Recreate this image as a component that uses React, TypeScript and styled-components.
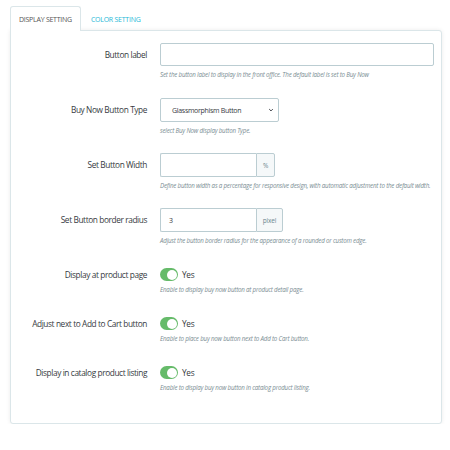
import React from "react";
import styled, { createGlobalStyle } from "styled-components";

const Global = createGlobalStyle`
  html, body { margin: 0; padding: 0; background: #fff; }
  body { font-family: "Open Sans", "Noto Sans", sans-serif; color: #363a41; }
  * { box-sizing: border-box; }
`;

const Page = styled.div`
  padding: 6px 8px 0 10px;
  width: 450px;
`;

const Tabs = styled.div`
  display: flex;
  align-items: flex-end;
  position: relative;
  z-index: 1;
  margin-bottom: -1px;
`;

const Tab = styled.div<{ $active?: boolean }>`
  height: 25px;
  display: flex;
  align-items: center;
  padding: 0 8px;
  font-size: 7px;
  letter-spacing: -0.25px;
  text-transform: uppercase;
  color: ${(p) => (p.$active ? "#555" : "#25b9d7")};
  background: ${(p) => (p.$active ? "#fff" : "transparent")};
  border: 1px solid ${(p) => (p.$active ? "#dbe6e9" : "transparent")};
  border-bottom: none;
  border-radius: 3px 3px 0 0;
  margin-right: ${(p) => (p.$active ? "1px" : "0")};
`;

const Panel = styled.div`
  border: 1px solid #dbe6e9;
  border-radius: 0 3px 3px 3px;
  box-shadow: 0 0 4px rgba(0, 0, 0, 0.08);
  background: #fff;
  padding: 12px 7px 31px 0;
`;

const Row = styled.div<{ $gap: number }>`
  display: grid;
  grid-template-columns: 136px 1fr;
  column-gap: 13px;
  margin-bottom: ${(p) => p.$gap}px;
  &:last-child { margin-bottom: 0; }
`;

const Label = styled.div<{ $h: number }>`
  text-align: right;
  font-size: 8.3px;
  letter-spacing: -0.4px;
  line-height: ${(p) => p.$h}px;
  color: #363a41;
`;

const Control = styled.div`
  display: flex;
  flex-direction: column;
  align-items: flex-start;
`;

const Help = styled.div`
  margin-top: 5px;
  font-size: 6.2px;
  letter-spacing: -0.2px;
  line-height: 8px;
  font-style: italic;
  color: #7a8d93;
  white-space: nowrap;
`;

const TextInput = styled.div<{ $w: number }>`
  width: ${(p) => p.$w}px;
  height: 23px;
  border: 1px solid #bbcdd2;
  border-radius: 2px;
  background: #fff;
  display: flex;
  align-items: center;
  padding: 0 8px;
  font-size: 7px;
  color: #363a41;
`;

const Select = styled.div`
  width: 119px;
  height: 24px;
  border: 1px solid #bbcdd2;
  border-radius: 2px;
  display: flex;
  align-items: center;
  justify-content: space-between;
  padding: 0 4px 0 11px;
  font-size: 7px;
  letter-spacing: -0.3px;
  color: #363a41;
`;

const Group = styled.div`
  display: flex;
  height: 24px;
`;

const GroupInput = styled.div`
  width: 96px;
  border: 1px solid #bbcdd2;
  border-right: none;
  border-radius: 2px 0 0 2px;
  display: flex;
  align-items: center;
  padding: 0 8px;
  font-size: 7px;
`;

const Addon = styled.div<{ $w: number }>`
  width: ${(p) => p.$w}px;
  border: 1px solid #bbcdd2;
  border-radius: 0 2px 2px 0;
  background: #f5f8f9;
  display: flex;
  align-items: center;
  justify-content: center;
  font-size: 6.5px;
  letter-spacing: -0.2px;
  color: #6c868e;
`;

const SwitchLine = styled.div`
  display: flex;
  align-items: center;
  height: 13px;
  gap: 4px;
`;

const Switch = styled.div`
  width: 18px;
  height: 13px;
  border-radius: 7px;
  background: #66bb6a;
  display: flex;
  align-items: center;
  justify-content: flex-end;
  padding: 1.5px;
`;

const Knob = styled.div`
  width: 10px;
  height: 10px;
  border-radius: 50%;
  background: #fff;
`;

const YesText = styled.span`
  font-size: 8.3px;
  letter-spacing: -0.3px;
  color: #363a41;
`;

const Chevron = () => (
  <svg width="6" height="6" viewBox="0 0 10 10">
    <path d="M2 3.5 L5 6.5 L8 3.5" fill="none" stroke="#363a41" strokeWidth="1.6" />
  </svg>
);

const toggles = [
  { label: "Display at product page", help: "Enable to display buy now button at product detail page." },
  { label: "Adjust next to Add to Cart button", help: "Enable to place buy now button next to Add to Cart button." },
  { label: "Display in catalog product listing", help: "Enable to display buy now button in catalog product listing." },
];

export default function App() {
  return (
    <>
      <Global />
      <Page>
        <Tabs>
          <Tab $active>Display Setting</Tab>
          <Tab>Color Setting</Tab>
        </Tabs>
        <Panel>
          <Row $gap={19}>
            <Label $h={23}>Button label</Label>
            <Control>
              <TextInput $w={274} />
              <Help>Set the button label to display in the front office. The default label is set to Buy Now</Help>
            </Control>
          </Row>
          <Row $gap={18}>
            <Label $h={24}>Buy Now Button Type</Label>
            <Control>
              <Select>
                <span>Glassmorphism Button</span>
                <Chevron />
              </Select>
              <Help>select Buy Now display button Type.</Help>
            </Control>
          </Row>
          <Row $gap={18}>
            <Label $h={24}>Set Button Width</Label>
            <Control>
              <Group>
                <GroupInput />
                <Addon $w={19}>%</Addon>
              </Group>
              <Help>Define button width as a percentage for responsive design, with automatic adjustment to the default width.</Help>
            </Control>
          </Row>
          <Row $gap={23}>
            <Label $h={24}>Set Button border radius</Label>
            <Control>
              <Group>
                <GroupInput>3</GroupInput>
                <Addon $w={27}>pixel</Addon>
              </Group>
              <Help>Adjust the button border radius for the appearance of a rounded or custom edge.</Help>
            </Control>
          </Row>
          {toggles.map((t) => (
            <Row $gap={23} key={t.label}>
              <Label $h={13}>{t.label}</Label>
              <Control>
                <SwitchLine>
                  <Switch>
                    <Knob />
                  </Switch>
                  <YesText>Yes</YesText>
                </SwitchLine>
                <Help>{t.help}</Help>
              </Control>
            </Row>
          ))}
        </Panel>
      </Page>
    </>
  );
}
